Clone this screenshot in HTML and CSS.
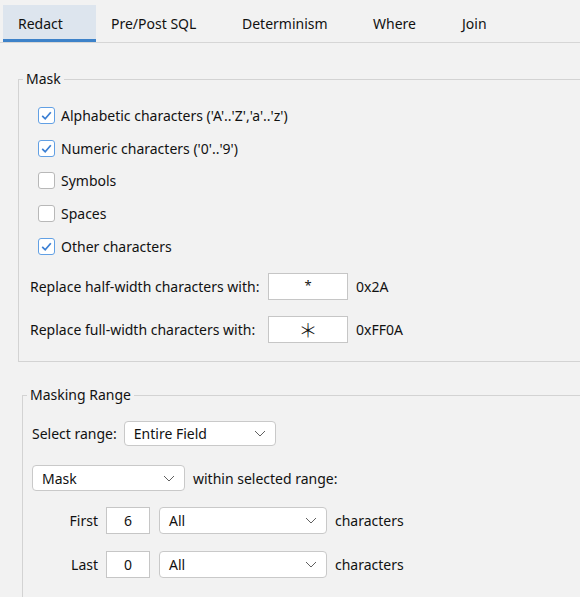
FILE: index.html
```html
<!DOCTYPE html>
<html>
<head>
<meta charset="utf-8">
<link rel="stylesheet" href="styles.css">
</head>
<body>
<div class="tabs">
  <div class="tab active w1">Redact</div>
  <div class="tab w2">Pre/Post SQL</div>
  <div class="tab w3">Determinism</div>
  <div class="tab w4">Where</div>
  <div class="tab w5">Join</div>
</div>

<fieldset class="group mask">
  <legend>Mask</legend>
  <div class="checks">
    <div class="check-row"><span class="cb on"><svg viewBox="0 0 17 17" width="17" height="17"><path d="M4.2 8.8 L7.2 11.8 L12.8 5.2" fill="none" stroke="#3b7fd3" stroke-width="1.7"/></svg></span><span>Alphabetic characters ('A'..'Z','a'..'z')</span></div>
    <div class="check-row"><span class="cb on"><svg viewBox="0 0 17 17" width="17" height="17"><path d="M4.2 8.8 L7.2 11.8 L12.8 5.2" fill="none" stroke="#3b7fd3" stroke-width="1.7"/></svg></span><span>Numeric characters ('0'..'9')</span></div>
    <div class="check-row"><span class="cb"></span><span>Symbols</span></div>
    <div class="check-row"><span class="cb"></span><span>Spaces</span></div>
    <div class="check-row"><span class="cb on"><svg viewBox="0 0 17 17" width="17" height="17"><path d="M4.2 8.8 L7.2 11.8 L12.8 5.2" fill="none" stroke="#3b7fd3" stroke-width="1.7"/></svg></span><span>Other characters</span></div>
  </div>
  <div class="replace">
    <span class="lbl">Replace half-width characters with:</span>
    <span class="textbox center small">*</span>
    <span class="lbl">0x2A</span>
    <span class="lbl">Replace full-width characters with:</span>
    <span class="textbox center wide">＊</span>
    <span class="lbl">0xFF0A</span>
  </div>
</fieldset>

<fieldset class="group range">
  <legend>Masking Range</legend>
  <div class="row r1">
    <span class="lbl">Select range:</span>
    <span class="combo c1"><span>Entire Field</span><svg class="chev" viewBox="0 0 12 7" width="12" height="7"><path d="M1 1 L6 6 L11 1" fill="none" stroke="#606060" stroke-width="1"/></svg></span>
  </div>
  <div class="row r2">
    <span class="combo c2"><span>Mask</span><svg class="chev" viewBox="0 0 12 7" width="12" height="7"><path d="M1 1 L6 6 L11 1" fill="none" stroke="#606060" stroke-width="1"/></svg></span>
    <span class="lbl">within selected range:</span>
  </div>
  <div class="row r3">
    <span class="lbl side">First</span>
    <span class="textbox center num">6</span>
    <span class="combo c3"><span>All</span><svg class="chev" viewBox="0 0 12 7" width="12" height="7"><path d="M1 1 L6 6 L11 1" fill="none" stroke="#606060" stroke-width="1"/></svg></span>
    <span class="lbl">characters</span>
  </div>
  <div class="row r4">
    <span class="lbl side">Last</span>
    <span class="textbox center num">0</span>
    <span class="combo c3"><span>All</span><svg class="chev" viewBox="0 0 12 7" width="12" height="7"><path d="M1 1 L6 6 L11 1" fill="none" stroke="#606060" stroke-width="1"/></svg></span>
    <span class="lbl">characters</span>
  </div>
</fieldset>
</body>
</html>
```

FILE: styles.css
```css
html, body {
  margin: 0;
  padding: 0;
  overflow: hidden;
  background: #f2f2f2;
}
body {
  width: 580px;
  height: 597px;
  font-family: "Noto Sans", "Segoe UI", sans-serif;
  font-size: 14px;
  color: #111;
}

.tabs {
  display: flex;
  padding: 5px 0 0 3px;
  height: 37px;
  border-bottom: 1px solid #d6d6d6;
}
.tab {
  box-sizing: border-box;
  height: 37px;
  padding-left: 15px;
  display: flex;
  align-items: center;
  white-space: nowrap;
  border-bottom: 3px solid transparent;
  padding-top: 2px;
}
.tab.active {
  background: #dde5ee;
  border-bottom-color: #3d82c9;
}
.w1 { width: 93px; }
.w2 { width: 131px; }
.w3 { width: 131px; }
.w4 { width: 89px; }
.w5 { width: 60px; }

.group {
  margin: 0;
  padding: 0;
  border: 1px solid #d3d3d3;
  width: 640px;
  box-sizing: border-box;
}
.group legend {
  padding: 0 3px;
  margin-left: 4px;
  line-height: 20px;
  height: 20px;
}
.mask {
  margin: 26px 0 0 18px;
  padding-bottom: 18px;
}
.range {
  margin: 23.5px 0 0 22px;
  height: 300px;
}

.checks {
  padding: 10px 0 0 19px;
}
.check-row {
  height: 32.75px;
  display: flex;
  align-items: center;
  gap: 6px;
}
.cb {
  box-sizing: border-box;
  width: 17px;
  height: 17px;
  border: 1px solid #b8b8b8;
  border-radius: 3px;
  background: #fff;
  display: block;
}
.cb.on {
  border-color: #62a0e4;
}
.cb svg {
  display: block;
  margin: -1px;
}

.replace {
  display: grid;
  grid-template-columns: 230px 80px auto;
  column-gap: 8px;
  row-gap: 15.5px;
  align-items: center;
  margin: 10.5px 0 0 11px;
}
.lbl {
  white-space: nowrap;
}
.textbox {
  box-sizing: border-box;
  height: 27px;
  background: #fff;
  border: 1px solid #c6c6c6;
  display: flex;
  align-items: center;
}
.textbox.center {
  justify-content: center;
}
.textbox.small {
  font-size: 13px;
  padding-bottom: 4px;
}
.textbox.wide {
  font-family: "Noto Sans CJK JP", sans-serif;
  font-weight: 300;
  font-size: 19px;
  line-height: 1;
}

.row {
  display: flex;
  align-items: center;
  padding-left: 9px;
}
.r1 { margin-top: 16px; gap: 7px; }
.r2 { margin-top: 19px; gap: 8px; }
.r3 { margin-top: 16px; gap: 8px; }
.r4 { margin-top: 17px; gap: 8px; }

.combo {
  box-sizing: border-box;
  background: #fff;
  border: 1px solid #c9c9c9;
  border-radius: 4px;
  display: flex;
  align-items: center;
  justify-content: space-between;
  padding: 0 9px 0 9px;
}
.c1 { width: 152px; height: 25px; }
.c2 { width: 153px; height: 26px; }
.c3 { width: 168px; height: 27px; }
.chev { display: block; }

.side {
  width: 66px;
  text-align: right;
}
.num {
  width: 44px;
}
.r3 .combo, .r4 .combo { margin-left: 1px; }
```
